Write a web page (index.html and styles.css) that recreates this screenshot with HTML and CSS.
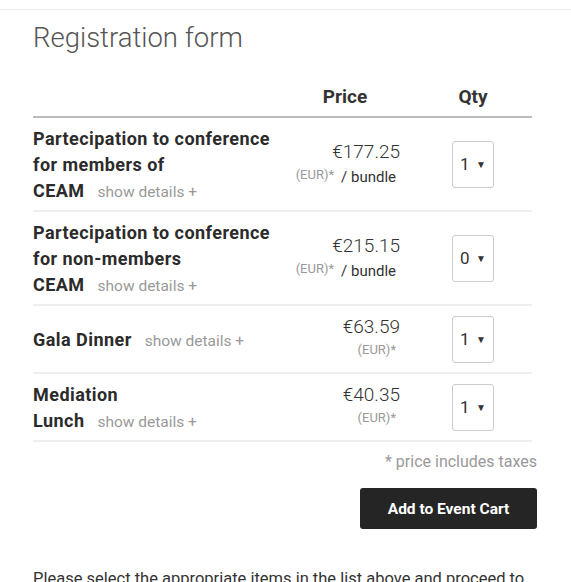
FILE: index.html
```html
<!DOCTYPE html>
<html>
<head>
<meta charset="utf-8">
<link rel="stylesheet" href="styles.css">
</head>
<body>
<div class="topbar"></div>
<main class="content">
  <h1 class="title">Registration form</h1>
  <table class="tickets">
    <thead>
      <tr>
        <th class="col-name"></th>
        <th class="col-price">Price</th>
        <th class="col-qty">Qty</th>
      </tr>
    </thead>
    <tbody>
      <tr>
        <td class="col-name"><span class="name">Partecipation to conference<br>for members of<br>CEAM</span> <a class="details">show details +</a></td>
        <td class="col-price"><div class="amount">€177.25</div><div class="sub"><span class="cur">(EUR)*</span> <span class="per">/ bundle</span><span class="pad"></span></div></td>
        <td class="col-qty"><div class="select"><span>1</span><span class="caret">▼</span></div></td>
      </tr>
      <tr>
        <td class="col-name"><span class="name">Partecipation to conference<br>for non-members<br>CEAM</span> <a class="details">show details +</a></td>
        <td class="col-price"><div class="amount">€215.15</div><div class="sub"><span class="cur">(EUR)*</span> <span class="per">/ bundle</span><span class="pad"></span></div></td>
        <td class="col-qty"><div class="select"><span>0</span><span class="caret">▼</span></div></td>
      </tr>
      <tr>
        <td class="col-name"><span class="name">Gala Dinner</span> <a class="details">show details +</a></td>
        <td class="col-price"><div class="amount">€63.59</div><div class="sub"><span class="cur">(EUR)*</span><span class="pad"></span></div></td>
        <td class="col-qty"><div class="select"><span>1</span><span class="caret">▼</span></div></td>
      </tr>
      <tr>
        <td class="col-name"><span class="name">Mediation<br>Lunch</span> <a class="details">show details +</a></td>
        <td class="col-price"><div class="amount">€40.35</div><div class="sub"><span class="cur">(EUR)*</span><span class="pad"></span></div></td>
        <td class="col-qty"><div class="select"><span>1</span><span class="caret">▼</span></div></td>
      </tr>
    </tbody>
  </table>
  <p class="taxes">* price includes taxes</p>
  <div class="actions"><button class="cart-btn">Add to Event Cart</button></div>
  <p class="note">Please select the appropriate items in the list above and proceed to</p>
</main>
</body>
</html>
```

FILE: styles.css
```css
html, body {
  margin: 0;
  padding: 0;
  background: #fff;
}
body {
  font-family: "Roboto", "Liberation Sans", sans-serif;
  color: #333;
}
.topbar {
  height: 9px;
  border-bottom: 1px solid #ebebeb;
}
.content {
  padding: 0 34px 0 33px;
}
.title {
  margin: 12px 0 0;
  font-weight: 300;
  font-size: 27.5px;
  line-height: 32px;
  color: #555;
}
.tickets {
  width: 499px;
  border-collapse: collapse;
  margin-top: 31px;
}
.tickets th {
  font-size: 19px;
  font-weight: 700;
  color: #333;
  padding: 0 0 7px;
  line-height: 24px;
  border-bottom: 2px solid #bbb;
}
.col-name {
  width: 257px;
  text-align: left;
}
.tickets th.col-price {
  text-align: center;
  width: 110px;
}
.tickets th.col-qty {
  text-align: center;
  padding-left: 14px;
}
.tickets td {
  border-bottom: 2px solid #eee;
  vertical-align: middle;
  padding: 9px 0 9px;
}
.tickets td.col-name {
  padding: 8px 0 5px;
}
.name {
  font-size: 18px;
  font-weight: 700;
  letter-spacing: 0.45px;
  line-height: 26px;
  color: #2b2b2b;
}
.details {
  font-size: 15.5px;
  color: #999;
  margin-left: 9px;
  line-height: 26px;
}
td.col-price {
  text-align: right;
}
.amount {
  font-size: 19px;
  font-weight: 300;
  color: #333;
  line-height: 24px;
}
.sub {
  line-height: 22px;
}
.cur {
  font-size: 13px;
  color: #999;
  vertical-align: 3px;
}
.per {
  font-size: 15px;
  color: #333;
  margin-left: 3px;
}
.pad {
  display: inline-block;
  width: 4px;
}
td.col-qty {
  padding-left: 52px;
}
.select {
  box-sizing: border-box;
  width: 42px;
  height: 47px;
  border: 1px solid #ccc;
  border-radius: 3px;
  display: flex;
  align-items: center;
  justify-content: space-between;
  padding: 0 7px 0 7px;
  font-size: 17px;
  color: #333;
}
.caret {
  font-size: 10px;
}
.taxes {
  margin: 10px 0 0;
  text-align: right;
  font-size: 16px;
  color: #999;
  line-height: 20px;
}
.actions {
  display: flex;
  justify-content: flex-end;
  margin-top: 16px;
}
.cart-btn {
  width: 177px;
  height: 41px;
  border: 0;
  border-radius: 3px;
  background: #252525;
  color: #fff;
  font-family: "Roboto", "Liberation Sans", sans-serif;
  font-weight: 700;
  font-size: 15.5px;
  letter-spacing: 0;
}
.note {
  margin: 38px 0 0;
  font-size: 16.5px;
  line-height: 24px;
  color: #333;
}
```
